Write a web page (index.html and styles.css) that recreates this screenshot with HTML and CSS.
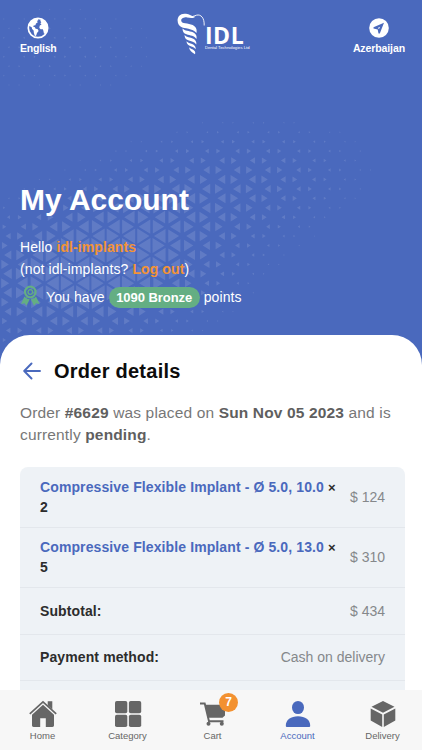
FILE: index.html
```html
<!DOCTYPE html>
<html lang="en">
<head>
<meta charset="utf-8">
<meta name="viewport" content="width=device-width, initial-scale=1">
<title>My Account</title>
<link rel="stylesheet" href="styles.css">
</head>
<body>
<div class="app">
  <main class="screen">
    <svg class="pattern" viewBox="0 0 422 380" aria-hidden="true"><path id="triangles" d=""/></svg>
    <header class="topbar">
      <a class="top-link">
        <svg class="top-icon" viewBox="0 0 22 22"><circle cx="11" cy="11" r="9.7" fill="none" stroke="#fff" stroke-width="1.7"/><path fill="#fff" d="M4 4.500 7 2l3.500-.5 1 1.500-1.500 1 .8 1.200-1.800 1.300-.6 1.700-1.700.3-.5 1.300 1.800.5.3 1.200 2.500.8.8 1.700-1.600 2-.8 2.500-1.300.7-1-3.200-.3-2.500-1.500-1.500-.4-1.800L1.500 8.500ZM13 3.500 15.500 2.500 19.500 6.500 20.700 10 20.500 13 18.500 16.500 17 16.800 16.300 13.500 15.800 12.300 13.500 12.200 12.300 10.500 12.800 8.500 14.500 7.600 13.300 6.300 14.300 5.200Z"/></svg>
        <span class="lang">English</span>
      </a>
      <div class="logo">
        <svg class="screw" viewBox="0 0 28 42"><path d="M27.200 12.500C27.500 5 24 1 19.500 2.200c-3 .8-4.500 2-7 1.500" fill="none" stroke="#fff" stroke-width=".9"/><path fill="#fff" d="M9 .8C3.500 0 .5 3.500.6 7.500c.1 3.500 1.500 5 3.300 6.300 3 2 12 1.500 15.600 6.200.8-3.500-.7-6.500-3.800-8C11.500 10 4 11 4.200 7.500c.1-2.500 3.300-3.300 5.800-3.100 3 .2 5.500 1.500 8.500-.6C14.500 3.500 12.500 1.200 9 .8ZM5.500 15.500c0 3.200 1.200 4.800 4 5.800 3.500 1.200 8 1.500 10 4.700.6-3-.6-5.500-3.500-6.700-4-1.600-8-1.300-10.500-3.800ZM7.500 22c.2 3 1.300 4.300 3.700 5.300 3.100 1.200 6.300 1.500 8.100 4.300.4-2.600-.6-4.800-3-5.900-3.300-1.500-6.500-1.300-8.800-3.700ZM9.500 28.200c.3 2.500 1.200 3.600 3.100 4.500 2.300 1 4.700 1.400 6.100 3.600.1-2.200-.7-3.900-2.500-4.900-2.300-1.300-4.700-1.100-6.700-3.200ZM12 34.200c.5 3.300 2.700 5 6 7 .5-1.500.3-2.700-.9-3.800-1.500-1.400-3.500-1.400-5.100-3.200Z"/></svg>
        <div class="logo-text"><b>IDL</b><small>Dental Technologies Ltd</small></div>
      </div>
      <a class="top-link">
        <svg class="top-icon" viewBox="0 0 22 22"><circle cx="11" cy="11" r="9.800" fill="#fff"/><path fill="#4a69bd" d="M16 5.800 5.500 10.300v1.300l4.200.8.800 4.100h1.300Z"/><path fill="#fff" d="m9.800 10.900 2.300-1.100-1.100 2.300Z"/></svg>
        <span class="country">Azerbaijan</span>
      </a>
    </header>

    <section class="hero">
      <h1>My Account</h1>
      <p class="hello">Hello <a>idl-implants</a></p>
      <p class="logout">(not idl-implants? <a>Log out</a>)</p>
      <p class="points">
        <svg class="award" viewBox="0 0 20 22"><circle cx="10.300" cy="7" r="5.300" fill="none" stroke="#64ae83" stroke-width="2.200"/><circle cx="10.300" cy="7" r="2.300" fill="none" stroke="#64ae83" stroke-width="1.300"/><path fill="#64ae83" d="m4.400 11.500 2.600 2.300 2.700.5-3.200 6.500-2-2.500-3.500.6ZM16 11.500l-2.500 2.300-2.700.5 3.200 6.500 2.200-2.500 3.500.6Z"/></svg>
        <span>You have</span><b class="pill">1090 Bronze</b><span>points</span>
      </p>
    </section>

    <section class="sheet">
      <div class="heading">
        <svg class="back" viewBox="0 0 18 18"><path d="M17 9H1.500M8.500 1.500 1.200 9l7.300 7.500" fill="none" stroke="#4a69bd" stroke-width="1.900" stroke-linejoin="round" stroke-linecap="round"/></svg>
        <h2>Order details</h2>
      </div>
      <p class="summary"><span class="line1">Order <b>#6629</b> was placed on <b>Sun Nov 05 2023</b> and is</span> <span class="line2">currently <b>pending</b>.</span></p>
      <div class="order">
        <div class="row item"><div class="name"><a>Compressive Flexible Implant - Ø 5.0, 10.0</a> <span class="times">×</span><br>2</div><div class="value">$ 124</div></div>
        <div class="row item"><div class="name"><a>Compressive Flexible Implant - Ø 5.0, 13.0</a> <span class="times">×</span><br>5</div><div class="value">$ 310</div></div>
        <div class="row"><div class="name">Subtotal:</div><div class="value">$ 434</div></div>
        <div class="row"><div class="name">Payment method:</div><div class="value">Cash on delivery</div></div>
        <div class="row"></div>
      </div>
    </section>
  </main>

  <nav class="tabs">
    <a class="tab"><svg viewBox="0 0 28 28"><path d="M.8 13.800 14 1.800l13.200 12" fill="none" stroke="currentColor" stroke-width="1.700"/><path fill="currentColor" d="M18.700 1.200h4.600v8.200l-4.600-4.200ZM14 4.700l11 10v10.600c0 1-.6 1.600-1.600 1.600h-6.600v-8.700h-5.600v8.700H4.600c-1 0-1.600-.6-1.600-1.600V14.700Z"/></svg><span>Home</span></a>
    <a class="tab"><svg viewBox="0 0 28 28" fill="currentColor"><rect x="1" y="1" width="12.300" height="12.300" rx="1.800"/><rect x="14.900" y="1" width="12.300" height="12.300" rx="1.800"/><rect x="1" y="14.800" width="12.300" height="12.300" rx="1.800"/><rect x="14.900" y="14.800" width="12.300" height="12.300" rx="1.800"/></svg><span>Category</span></a>
    <a class="tab"><svg viewBox="0 0 28 28"><path d="M1 3.500h4.700l4.300 17.800h14.500" fill="none" stroke="currentColor" stroke-width="1.900"/><path fill="currentColor" d="M6 4.800h20v10.700L23.500 17.800H9.300Z"/><circle cx="9.500" cy="23.700" r="2" fill="currentColor"/><circle cx="22.800" cy="23.700" r="2" fill="currentColor"/></svg><b class="badge">7</b><span>Cart</span></a>
    <a class="tab active"><svg viewBox="0 0 28 28" fill="currentColor"><ellipse cx="14" cy="7.500" rx="6" ry="6.600"/><path d="M1.800 25.500c0-5.800 5-9.300 12.200-9.300s12.200 3.500 12.200 9.300c0 1-.5 1.500-1.500 1.500H3.300c-1 0-1.500-.5-1.500-1.500Z"/></svg><span>Account</span></a>
    <a class="tab"><svg viewBox="0 0 28 28" fill="currentColor"><path d="m14 1 11.500 5.800L14 12.800 2.500 6.800ZM1.700 8.400l11.500 6v12.700L1.700 20.500ZM26.300 8.400l-11.500 6v12.700l11.500-6.600Z"/></svg><span>Delivery</span></a>
  </nav>
</div>
<script src="pattern.js"></script>
</body>
</html>
```
FILE: pattern.js
```js
// Halftone of triangles: each pair shares a vertical edge, rows alternate by half a period.
const PERIOD = 30.55;
const ROW = 9.44;
const bump = (x, y, cx, cy, rx, ry, angle) => {
  const c = Math.cos(angle), s = Math.sin(angle);
  const u = ((x - cx) * c + (y - cy) * s) / rx;
  const v = (-(x - cx) * s + (y - cy) * c) / ry;
  return Math.exp(-(u * u + v * v));
};
const size = (x, y) => Math.min(0.8,
  1.0 * bump(x, y, 95, 268, 115, 60, -0.2) +
  0.42 * bump(x, y, 228, 186, 110, 48, -0.15) +
  0.13 * bump(x, y, 60, 50, 120, 55, 0));
let d = "";
for (let r = -18; r <= 20; r++) {
  const y = 170 + r * ROW;
  const shift = r % 2 ? PERIOD / 2 : 0;
  for (let k = -8; k < 9; k++) {
    const edge = 212.6 + k * PERIOD + shift;
    for (const dir of [-1, 1]) {
      const cx = edge + dir * PERIOD / 6;
      const s = size(cx, y);
      if (s < 0.07) continue;
      const base = cx - dir * s * PERIOD / 6;
      const tip = cx + dir * s * PERIOD / 3;
      d += `M${base.toFixed(2)} ${(y - s * ROW).toFixed(2)}V${(y + s * ROW).toFixed(2)}L${tip.toFixed(2)} ${y.toFixed(2)}Z`;
    }
  }
}
document.getElementById("triangles").setAttribute("d", d);
```
FILE: styles.css
```css
* { box-sizing: border-box; }
body { margin: 0; font-family: "Liberation Sans", Arial, sans-serif; }
h1, h2, p { margin: 0; }
.app { width: 422px; height: 750px; display: flex; flex-direction: column; overflow: hidden; background: #4a69bd; }
.screen { position: relative; flex: 1; min-height: 0; overflow: hidden; display: flex; flex-direction: column; }
.pattern { position: absolute; left: 0; top: 0; width: 422px; height: 380px; fill: #fff; opacity: .12; }
.topbar { position: relative; display: flex; justify-content: space-between; padding: 17px 17px 0 20px; height: 60px; color: #fff; }
.top-link { display: flex; flex-direction: column; align-items: center; font-size: 10.500px; font-weight: 700; line-height: 14px; }
.lang { letter-spacing: -.2px; }
.country { letter-spacing: -.1px; }
.top-icon { width: 22px; height: 22px; margin-bottom: 2px; }
.logo { display: flex; margin: -4px 0 0 17px; height: 44px; }
.screw { width: 28px; height: 42px; flex: none; }
.logo-text { display: flex; flex-direction: column; padding-top: 13px; }
.logo-text b { font-family: "Open Sans", sans-serif; font-size: 23px; line-height: 19px; letter-spacing: .6px; }
.logo-text small { font-size: 4.200px; line-height: 5px; white-space: nowrap; }
.hero { position: relative; padding: 123px 20px 0; height: 275px; color: #fff; font-size: 14px; letter-spacing: .1px; }
h1 { font-size: 30px; line-height: 34px; letter-spacing: 0; }
.hello { margin-top: 19px; line-height: 22px; }
.hero a { color: #f39336; font-weight: 700; }
.logout { line-height: 22px; }
.points { display: flex; align-items: center; height: 28px; margin-top: 2px; letter-spacing: .1px; }
.points span { position: relative; top: 1px; }
.award { width: 20px; height: 22px; margin-right: 6px; }
.pill { width: 91px; margin: 2px 4px 0; text-align: center; height: 21px; line-height: 21px; border-radius: 11px; background: #64ae83; font-size: 13px; letter-spacing: -.05px; }
.sheet { position: relative; flex: 1; min-height: 0; background: #fff; border-radius: 30px 30px 0 0; padding: 22px 17px 0 20px; }
.heading { display: flex; align-items: center; height: 28px; }
.back { width: 18px; height: 18px; margin: 0 13px 0 3px; }
h2 { font-size: 20px; line-height: 28px; color: #0c0c0c; letter-spacing: .25px; }
.summary { margin-top: 17px; font-size: 15.500px; line-height: 22px; color: #777; letter-spacing: .15px; }
.summary b { color: #5f5f5f; }
.summary span { display: block; white-space: nowrap; }
.order { margin-top: 21px; border-radius: 8px; background: #eef2f6; overflow: hidden; }
.row { display: flex; justify-content: space-between; align-items: center; height: 46.500px; padding: 0 20px; border-bottom: 1px solid #e3e7ec; font-size: 14px; }
.item { height: 60.500px; }
.name { font-weight: 700; color: #2c2c2c; line-height: 20px; white-space: nowrap; letter-spacing: .11px; }
.name a { color: #4a69bd; }
.times { font-size: 13px; line-height: 1; }
.value { color: #85888b; white-space: nowrap; }
.tabs { position: relative; flex: none; display: grid; grid-template-columns: repeat(5, 85px); height: 60px; background: #f7f7f7; }
.tab { position: relative; display: flex; flex-direction: column; align-items: center; padding-top: 10px; color: #666; font-size: 9.500px; line-height: 12px; }
.tab svg { width: 28px; height: 28px; margin-bottom: 2px; }
.active { color: #4a69bd; }
.badge { position: absolute; left: 49px; top: 3px; width: 19px; height: 19px; border-radius: 50%; background: #f39130; color: #fff; font-size: 12px; line-height: 19px; text-align: center; }
```
